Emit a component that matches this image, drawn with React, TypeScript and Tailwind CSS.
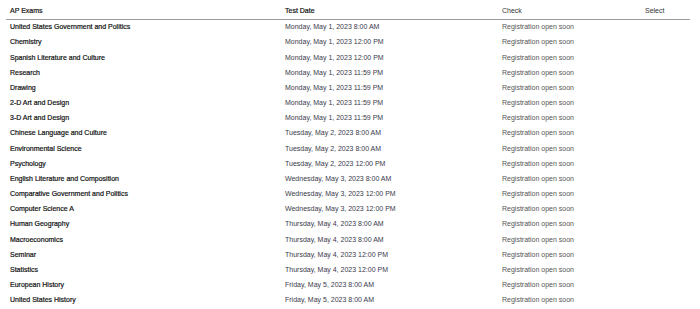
const exams = [
  ["United States Government and Politics", "Monday, May 1, 2023 8:00 AM"],
  ["Chemistry", "Monday, May 1, 2023 12:00 PM"],
  ["Spanish Literature and Culture", "Monday, May 1, 2023 12:00 PM"],
  ["Research", "Monday, May 1, 2023 11:59 PM"],
  ["Drawing", "Monday, May 1, 2023 11:59 PM"],
  ["2-D Art and Design", "Monday, May 1, 2023 11:59 PM"],
  ["3-D Art and Design", "Monday, May 1, 2023 11:59 PM"],
  ["Chinese Language and Culture", "Tuesday, May 2, 2023 8:00 AM"],
  ["Environmental Science", "Tuesday, May 2, 2023 8:00 AM"],
  ["Psychology", "Tuesday, May 2, 2023 12:00 PM"],
  ["English Literature and Composition", "Wednesday, May 3, 2023 8:00 AM"],
  ["Comparative Government and Politics", "Wednesday, May 3, 2023 12:00 PM"],
  ["Computer Science A", "Wednesday, May 3, 2023 12:00 PM"],
  ["Human Geography", "Thursday, May 4, 2023 8:00 AM"],
  ["Macroeconomics", "Thursday, May 4, 2023 8:00 AM"],
  ["Seminar", "Thursday, May 4, 2023 12:00 PM"],
  ["Statistics", "Thursday, May 4, 2023 12:00 PM"],
  ["European History", "Friday, May 5, 2023 8:00 AM"],
  ["United States History", "Friday, May 5, 2023 8:00 AM"],
]

export default function App() {
  return (
    <div className="w-[700px] h-[309px] bg-white px-[6px] pt-[1px] font-['Liberation_Sans',Arial,sans-serif] text-[7px] overflow-hidden">
      <div className="flex h-[19px] pt-[2px] items-center border-b-[1.5px] border-[#9a9a9a] w-[684px] text-[#111] [-webkit-text-stroke:0.2px_#111]">
        <div className="w-[279px] pl-[4px]">AP Exams</div>
        <div className="w-[217px]">Test Date</div>
        <div className="w-[143px] text-[#333] [-webkit-text-stroke:0px]">Check</div>
        <div className="text-[#333] [-webkit-text-stroke:0px]">Select</div>
      </div>
      {exams.map(([name, date]) => (
        <div key={name} className="flex h-[15.17px] items-center">
          <div className="w-[279px] pl-[4px] text-[#111] [-webkit-text-stroke:0.2px_#111]">{name}</div>
          <div className="w-[217px] text-[#3a3a4c]">{date}</div>
          <div className="w-[143px] text-[#555]">Registration open soon</div>
        </div>
      ))}
    </div>
  )
}
